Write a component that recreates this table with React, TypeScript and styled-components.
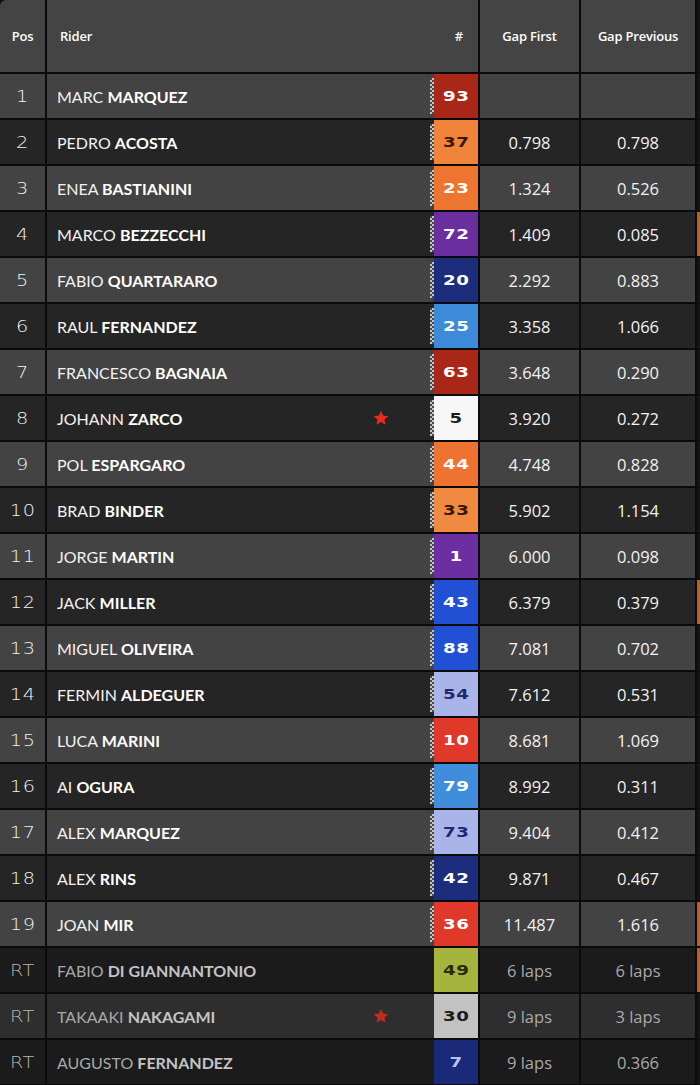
import React from "react";
import styled, { createGlobalStyle } from "styled-components";

const GlobalStyle = createGlobalStyle`
  html, body {
    margin: 0;
    padding: 0;
    background: #0d0d0d;
  }
  body {
    font-family: Lato, "Open Sans", sans-serif;
  }
`;

type Rider = {
  pos: string;
  first: string;
  last: string;
  num: string;
  bg: string;
  fg: string;
  gapFirst: string;
  gapPrev: string;
  star?: boolean;
  edge?: boolean;
};

const riders: Rider[] = [
  { pos: "1", first: "MARC", last: "MARQUEZ", num: "93", bg: "#a82719", fg: "#ffffff", gapFirst: "", gapPrev: "" },
  { pos: "2", first: "PEDRO", last: "ACOSTA", num: "37", bg: "#f0843a", fg: "#3a1608", gapFirst: "0.798", gapPrev: "0.798" },
  { pos: "3", first: "ENEA", last: "BASTIANINI", num: "23", bg: "#ee7530", fg: "#ffffff", gapFirst: "1.324", gapPrev: "0.526" },
  { pos: "4", first: "MARCO", last: "BEZZECCHI", num: "72", bg: "#6a2e9e", fg: "#ffffff", gapFirst: "1.409", gapPrev: "0.085", edge: true },
  { pos: "5", first: "FABIO", last: "QUARTARARO", num: "20", bg: "#1b2d7c", fg: "#ffffff", gapFirst: "2.292", gapPrev: "0.883" },
  { pos: "6", first: "RAUL", last: "FERNANDEZ", num: "25", bg: "#3d8bd8", fg: "#ffffff", gapFirst: "3.358", gapPrev: "1.066" },
  { pos: "7", first: "FRANCESCO", last: "BAGNAIA", num: "63", bg: "#a82719", fg: "#ffffff", gapFirst: "3.648", gapPrev: "0.290" },
  { pos: "8", first: "JOHANN", last: "ZARCO", num: "5", bg: "#f7f7f7", fg: "#1c1c1c", gapFirst: "3.920", gapPrev: "0.272", star: true },
  { pos: "9", first: "POL", last: "ESPARGARO", num: "44", bg: "#ee7330", fg: "#ffffff", gapFirst: "4.748", gapPrev: "0.828" },
  { pos: "10", first: "BRAD", last: "BINDER", num: "33", bg: "#f08a40", fg: "#3a1608", gapFirst: "5.902", gapPrev: "1.154" },
  { pos: "11", first: "JORGE", last: "MARTIN", num: "1", bg: "#6b2fa2", fg: "#ffffff", gapFirst: "6.000", gapPrev: "0.098" },
  { pos: "12", first: "JACK", last: "MILLER", num: "43", bg: "#2150d4", fg: "#ffffff", gapFirst: "6.379", gapPrev: "0.379", edge: true },
  { pos: "13", first: "MIGUEL", last: "OLIVEIRA", num: "88", bg: "#2150d4", fg: "#ffffff", gapFirst: "7.081", gapPrev: "0.702" },
  { pos: "14", first: "FERMIN", last: "ALDEGUER", num: "54", bg: "#a9b5e8", fg: "#1d2a6e", gapFirst: "7.612", gapPrev: "0.531" },
  { pos: "15", first: "LUCA", last: "MARINI", num: "10", bg: "#e0392a", fg: "#ffffff", gapFirst: "8.681", gapPrev: "1.069" },
  { pos: "16", first: "AI", last: "OGURA", num: "79", bg: "#3f8edb", fg: "#ffffff", gapFirst: "8.992", gapPrev: "0.311" },
  { pos: "17", first: "ALEX", last: "MARQUEZ", num: "73", bg: "#a9b5e8", fg: "#1d2a6e", gapFirst: "9.404", gapPrev: "0.412" },
  { pos: "18", first: "ALEX", last: "RINS", num: "42", bg: "#1b2d7c", fg: "#ffffff", gapFirst: "9.871", gapPrev: "0.467" },
  { pos: "19", first: "JOAN", last: "MIR", num: "36", bg: "#e0392a", fg: "#ffffff", gapFirst: "11.487", gapPrev: "1.616", edge: true },
  { pos: "RT", first: "FABIO", last: "DI GIANNANTONIO", num: "49", bg: "#a4b43c", fg: "#2a2a10", gapFirst: "6 laps", gapPrev: "6 laps", edge: true },
  { pos: "RT", first: "TAKAAKI", last: "NAKAGAMI", num: "30", bg: "#c2c2c2", fg: "#1c1c1c", gapFirst: "9 laps", gapPrev: "3 laps", star: true },
  { pos: "RT", first: "AUGUSTO", last: "FERNANDEZ", num: "7", bg: "#1b2a78", fg: "#b9c3f0", gapFirst: "9 laps", gapPrev: "0.366" },
];

const Table = styled.div`
  display: grid;
  grid-template-columns: 45px 431px 99px 114px 1fr;
  grid-auto-rows: 44px;
  grid-template-rows: 72px;
  gap: 2px;
  width: 700px;
  height: 1085px;
  overflow: hidden;
  background: #0b0b0b;
  border-top-left-radius: 6px;
`;

const HeadCell = styled.div`
  background: #444444;
  display: flex;
  align-items: center;
  justify-content: center;
  color: #ffffff;
  font-family: "Open Sans", Lato, sans-serif;
  font-size: 13px;
  font-weight: 600;
  letter-spacing: -0.2px;
`;

const RiderHead = styled(HeadCell)`
  justify-content: space-between;
  padding: 0 15px 0 13px;
`;

const Cell = styled.div<{ $dark: boolean; $retired: boolean }>`
  background: ${(p) =>
    p.$retired
      ? p.$dark
        ? "#1b1b1b"
        : "#2e2e2e"
      : p.$dark
      ? "#252525"
      : "#434343"};
  display: flex;
  align-items: center;
  justify-content: center;
  color: ${(p) => (p.$retired ? "#a9a9a9" : "#f2f2f2")};
`;

const PosCell = styled(Cell)`
  font-family: "DejaVu Sans", sans-serif;
  font-size: 16px;
  font-weight: 300;
  color: ${(p) => (p.$retired ? "#b5b5b5" : "#f2f2f2")};
  letter-spacing: 0.5px;
`;

const PosText = styled.span`
  display: inline-block;
  transform: scaleX(1.2);
`;

const RiderCell = styled(Cell)`
  justify-content: flex-start;
  padding-left: 10px;
`;

const Name = styled.div<{ $retired: boolean }>`
  flex: 1;
  font-family: Lato, "Open Sans", sans-serif;
  font-size: 16px;
  color: ${(p) => (p.$retired ? "#a9a9a9" : "#f2f2f2")};
  white-space: nowrap;
  b {
    font-weight: 700;
    color: ${(p) => (p.$retired ? "#c4c4c4" : "#ffffff")};
  }
`;

const StarSlot = styled.div`
  width: 58px;
  display: flex;
  align-items: center;
  justify-content: flex-start;
`;

const Checker = styled.div<{ $show: boolean }>`
  width: 4px;
  align-self: stretch;
  margin: 4px 0;
  background-color: ${(p) => (p.$show ? "#2a2a2a" : "transparent")};
  background-image: ${(p) =>
    p.$show
      ? "repeating-conic-gradient(#c4c4c4 0 25%, #4a4a4a 0 50%)"
      : "none"};
  background-size: 4px 4px;
`;

const Badge = styled.div<{ $bg: string; $fg: string }>`
  width: 44px;
  align-self: stretch;
  background: ${(p) => p.$bg};
  color: ${(p) => p.$fg};
  display: flex;
  align-items: center;
  justify-content: center;
  font-family: "DejaVu Sans", sans-serif;
  font-weight: 700;
  font-size: 14px;
  letter-spacing: 0.5px;
  span {
    display: inline-block;
    transform: scaleX(1.3);
  }
`;

const GapCell = styled(Cell)`
  font-family: "Open Sans", Lato, sans-serif;
  font-size: 16.5px;
`;

const EdgeCell = styled.div<{ $on?: boolean }>`
  background: ${(p) => (p.$on ? "#b5602a" : "#141414")};
`;

const Star = ({ dim }: { dim: boolean }) => (
  <svg width="18" height="18" viewBox="0 0 24 24">
    <path
      d="M12 2.5l2.9 6.3 6.9.7-5.2 4.6 1.5 6.8L12 17.4l-6.1 3.5 1.5-6.8-5.2-4.6 6.9-.7z"
      fill={dim ? "#c22a20" : "#e8291d"}
    />
  </svg>
);

export default function App() {
  return (
    <>
      <GlobalStyle />
      <Table>
        <HeadCell>Pos</HeadCell>
        <RiderHead>
          <span>Rider</span>
          <span>#</span>
        </RiderHead>
        <HeadCell>Gap First</HeadCell>
        <HeadCell>Gap Previous</HeadCell>
        <EdgeCell />
        {riders.map((r, i) => {
          const dark = i % 2 === 1;
          const retired = r.pos === "RT";
          return (
            <React.Fragment key={r.num}>
              <PosCell $dark={dark} $retired={retired}>
                <PosText>{r.pos}</PosText>
              </PosCell>
              <RiderCell $dark={dark} $retired={retired}>
                <Name $retired={retired}>
                  {r.first} <b>{r.last}</b>
                </Name>
                <StarSlot>{r.star && <Star dim={retired} />}</StarSlot>
                <Checker $show={!retired} />
                <Badge $bg={r.bg} $fg={r.fg}>
                  <span>{r.num}</span>
                </Badge>
              </RiderCell>
              <GapCell $dark={dark} $retired={retired}>
                {r.gapFirst}
              </GapCell>
              <GapCell $dark={dark} $retired={retired}>
                {r.gapPrev}
              </GapCell>
              <EdgeCell $on={r.edge} />
            </React.Fragment>
          );
        })}
      </Table>
    </>
  );
}
